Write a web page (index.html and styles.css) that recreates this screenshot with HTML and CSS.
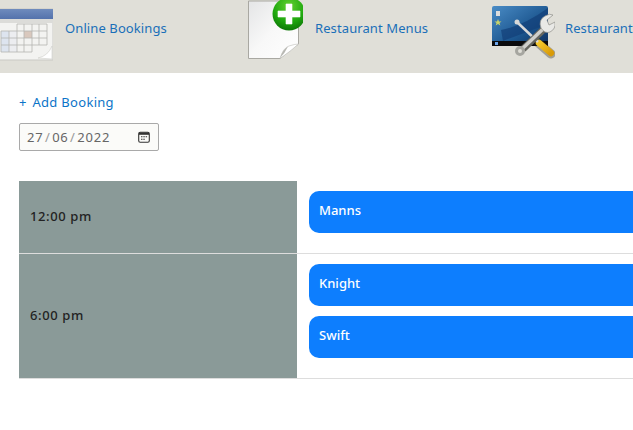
FILE: index.html
```html
<!DOCTYPE html>
<html lang="en">
<head>
<meta charset="utf-8">
<title>Bookings</title>
<link rel="stylesheet" href="styles.css">
</head>
<body>
<nav class="topnav">
  <a class="navitem" href="#">
    <svg class="navicon" viewBox="0 0 64 64">
      <defs>
        <linearGradient id="calbar" x1="0" y1="0" x2="0" y2="1"><stop offset="0" stop-color="#6f8bbd"/><stop offset="1" stop-color="#5472ac"/></linearGradient>
      </defs>
      <rect x="0" y="9" width="64" height="51" fill="#f3f3f1" stroke="#c9c9c4" stroke-width="1"/>
      <rect x="0" y="9" width="64" height="10" fill="url(#calbar)"/>
      <rect x="0" y="19" width="64" height="4" fill="#dcdcd9"/>
      <rect x="12" y="31" width="8" height="21" fill="#dde4ef"/>
      <rect x="20" y="31" width="8" height="21" fill="#ecedf0"/>
      <rect x="35" y="31" width="8" height="7" fill="#d9c8bd"/>
      <path d="M28 24H58M12 31H58M12 38H58M12 45H58M12 52H43M12 31V52M20 31V52M28 24V52M35 24V52M43 24V52M50 24V45M58 24V45" fill="none" stroke="#b4b4b1" stroke-width=".8"/>
      <path d="M49 58Q59 56 63 46L63 59Z" fill="#fff" stroke="#cfcfca" stroke-width=".6"/>
    </svg>
    <span class="navlabel">Online Bookings</span>
  </a>
  <a class="navitem" href="#">
    <svg class="navicon" viewBox="0 0 64 64">
      <defs>
        <linearGradient id="page" x1="0" y1="0" x2="1" y2="1"><stop offset="0" stop-color="#e4e5e6"/><stop offset=".5" stop-color="#f8f8f8"/><stop offset="1" stop-color="#fff"/></linearGradient>
        <radialGradient id="green" cx=".5" cy=".25" r=".8"><stop offset="0" stop-color="#62d030"/><stop offset=".6" stop-color="#1fa80e"/><stop offset="1" stop-color="#0b6f06"/></radialGradient>
      </defs>
      <path d="M9.500 1H49.500L59.500 28V44L41 58.500H9.500Z" fill="url(#page)" stroke="#a9a8a2" stroke-width="1"/>
      <path d="M41 58.500Q44 48 50 46Q56 44 59.500 44Q52 51 41 58.500Z" fill="#fff" stroke="#bdbdb8" stroke-width=".6"/>
      <path d="M41 58Q44 49 49 46.500Q46 53 41 58Z" fill="#b7b7b2"/>
      <circle cx="50" cy="14" r="16.500" fill="url(#green)"/>
      <path d="M47 4H53V11H61V17H53V24H47V17H39V11H47Z" fill="#fff" stroke="#fff" stroke-width=".6" stroke-linejoin="round"/>
    </svg>
    <span class="navlabel">Restaurant Menus</span>
  </a>
  <a class="navitem navitem-tools" href="#">
    <svg class="navicon" viewBox="0 0 64 64">
      <defs>
        <linearGradient id="screen" x1="0" y1="0" x2="1" y2="1"><stop offset="0" stop-color="#4a8cc6"/><stop offset=".6" stop-color="#1c568f"/><stop offset="1" stop-color="#0e2f5e"/></linearGradient>
        <linearGradient id="handle" x1="0" y1="0" x2="1" y2="1"><stop offset="0" stop-color="#f4c72c"/><stop offset="1" stop-color="#d99b08"/></linearGradient>
      </defs>
      <rect x="1" y="6" width="56" height="40" rx="2" fill="url(#screen)"/>
      <path d="M10 30Q32 26 57 8V24Q36 32 12 41Z" fill="#123f78" opacity=".7"/>
      <rect x="1" y="41" width="56" height="5" fill="#0a0a0c"/>
      <rect x="5" y="11" width="4" height="5" fill="#ddd"/>
      <path d="M7 19L8 21.500L10.500 21.500L8.500 23L9.300 25.500L7 24L4.700 25.500L5.500 23L3.500 21.500L6 21.500Z" fill="#c8d36a"/>
      <rect x="4" y="42" width="3" height="3" fill="#6ba4ea"/>
      <path d="M44 40L60 54" stroke="#2d2a1c" stroke-width="9" stroke-linecap="round" opacity=".35"/>
      <path d="M48 43L60 53" stroke="url(#handle)" stroke-width="6.500" stroke-linecap="round"/>
      <path d="M27 23L47 42" stroke="#d8d8d8" stroke-width="2.500"/>
      <circle cx="26" cy="22" r="2.500" fill="#d8d8d8"/>
      <path d="M53 29L32 49" stroke="#66665f" stroke-width="7"/>
      <path d="M52 29L31 49" stroke="#cfcfcb" stroke-width="3.500"/>
      <circle cx="29" cy="51" r="3.500" fill="none" stroke="#a6a6a0" stroke-width="3"/>
      <path d="M50 28Q47 20 54 16Q59 13 62 15L56 20L58 25L64 22Q65 29 59 32Q54 34 50 28Z" fill="#e9e9e6" stroke="#8f8f8a" stroke-width=".7"/>
    </svg>
    <span class="navlabel">Restaurant</span>
  </a>
</nav>
<main class="content">
  <a class="addlink" href="#"><span class="addplus">+</span> Add Booking</a>
  <div class="datebox">
    <span class="datetext">27<i>/</i>06<i>/</i>2022</span>
    <svg class="dateicon" viewBox="0 0 12 12">
      <rect x=".7" y="1.200" width="10.600" height="10" rx="1.500" fill="none" stroke="#333" stroke-width="1.100"/>
      <rect x="1" y="1.500" width="10" height="2.300" fill="#333"/>
      <path d="M3 5.800H4.500M5.300 5.800H6.800M7.600 5.800H9.100M3 8.200H4.500M5.300 8.200H6.800" stroke="#333" stroke-width="1.100"/>
    </svg>
  </div>
  <section class="schedule">
    <div class="slot">
      <div class="slottime">12:00 pm</div>
      <div class="slotitems">
        <div class="booking">Manns</div>
      </div>
    </div>
    <div class="slot">
      <div class="slottime">6:00 pm</div>
      <div class="slotitems">
        <div class="booking">Knight</div>
        <div class="booking">Swift</div>
      </div>
    </div>
  </section>
</main>
</body>
</html>
```
FILE: styles.css
```css
html, body {
  margin: 0;
  padding: 0;
  height: 100%;
  overflow: hidden;
  background: #fff;
}
body {
  width: 633px;
  font-family: "Noto Sans", "Open Sans", sans-serif;
  font-size: 13px;
  color: #222;
}
.topnav {
  display: flex;
  width: 644px;
  height: 73px;
  margin-left: -11px;
  background: #e0dfd8;
  overflow: hidden;
}
.navitem {
  flex: 0 0 250px;
  display: flex;
  align-items: center;
  height: 64px;
  gap: 12px;
  color: #1a6fb8;
  text-decoration: none;
  letter-spacing: .1px;
  white-space: nowrap;
}
.navitem-tools {
  flex-basis: 144px;
  gap: 10px;
}
.navitem-tools .navicon {
  margin-left: 2px;
}
.navlabel {
  padding-bottom: 8px;
}
.navicon {
  flex: none;
  width: 64px;
  height: 64px;
}
.content {
  padding: 21px 0 0 19px;
}
.addlink {
  display: block;
  height: 17px;
  line-height: 17px;
  color: #0b74c8;
  text-decoration: none;
  letter-spacing: .3px;
}
.addplus {
  margin-right: 2px;
}
.datebox {
  display: flex;
  align-items: center;
  justify-content: space-between;
  box-sizing: border-box;
  width: 140px;
  height: 28px;
  margin-top: 12px;
  padding: 0 8px 0 7px;
  border: 1px solid #a9a9a9;
  border-radius: 2px;
  background: #fbfbf9;
  color: #666;
  letter-spacing: .8px;
}
.datetext i {
  font-style: normal;
  margin: 0 1.500px;
  color: #999;
}
.dateicon {
  width: 12px;
  height: 12px;
}
.schedule {
  width: 614px;
  margin-top: 30px;
}
.slot {
  display: grid;
  grid-template-columns: 278px 1fr;
  border-bottom: 1px solid #ddd;
}
.slottime {
  display: flex;
  align-items: center;
  padding: 0 0 2px 11px;
  background: #8a9a98;
  color: #222;
  font-weight: 500;
  letter-spacing: .6px;
}
.slotitems {
  padding: 10px 0 10px 12px;
}
.booking {
  box-sizing: border-box;
  height: 42px;
  margin-bottom: 10px;
  padding: 0 10px 5px;
  display: flex;
  align-items: center;
  border-radius: 10px 0 0 10px;
  background: #0d7efe;
  color: #fff;
  font-weight: 500;
}
```
